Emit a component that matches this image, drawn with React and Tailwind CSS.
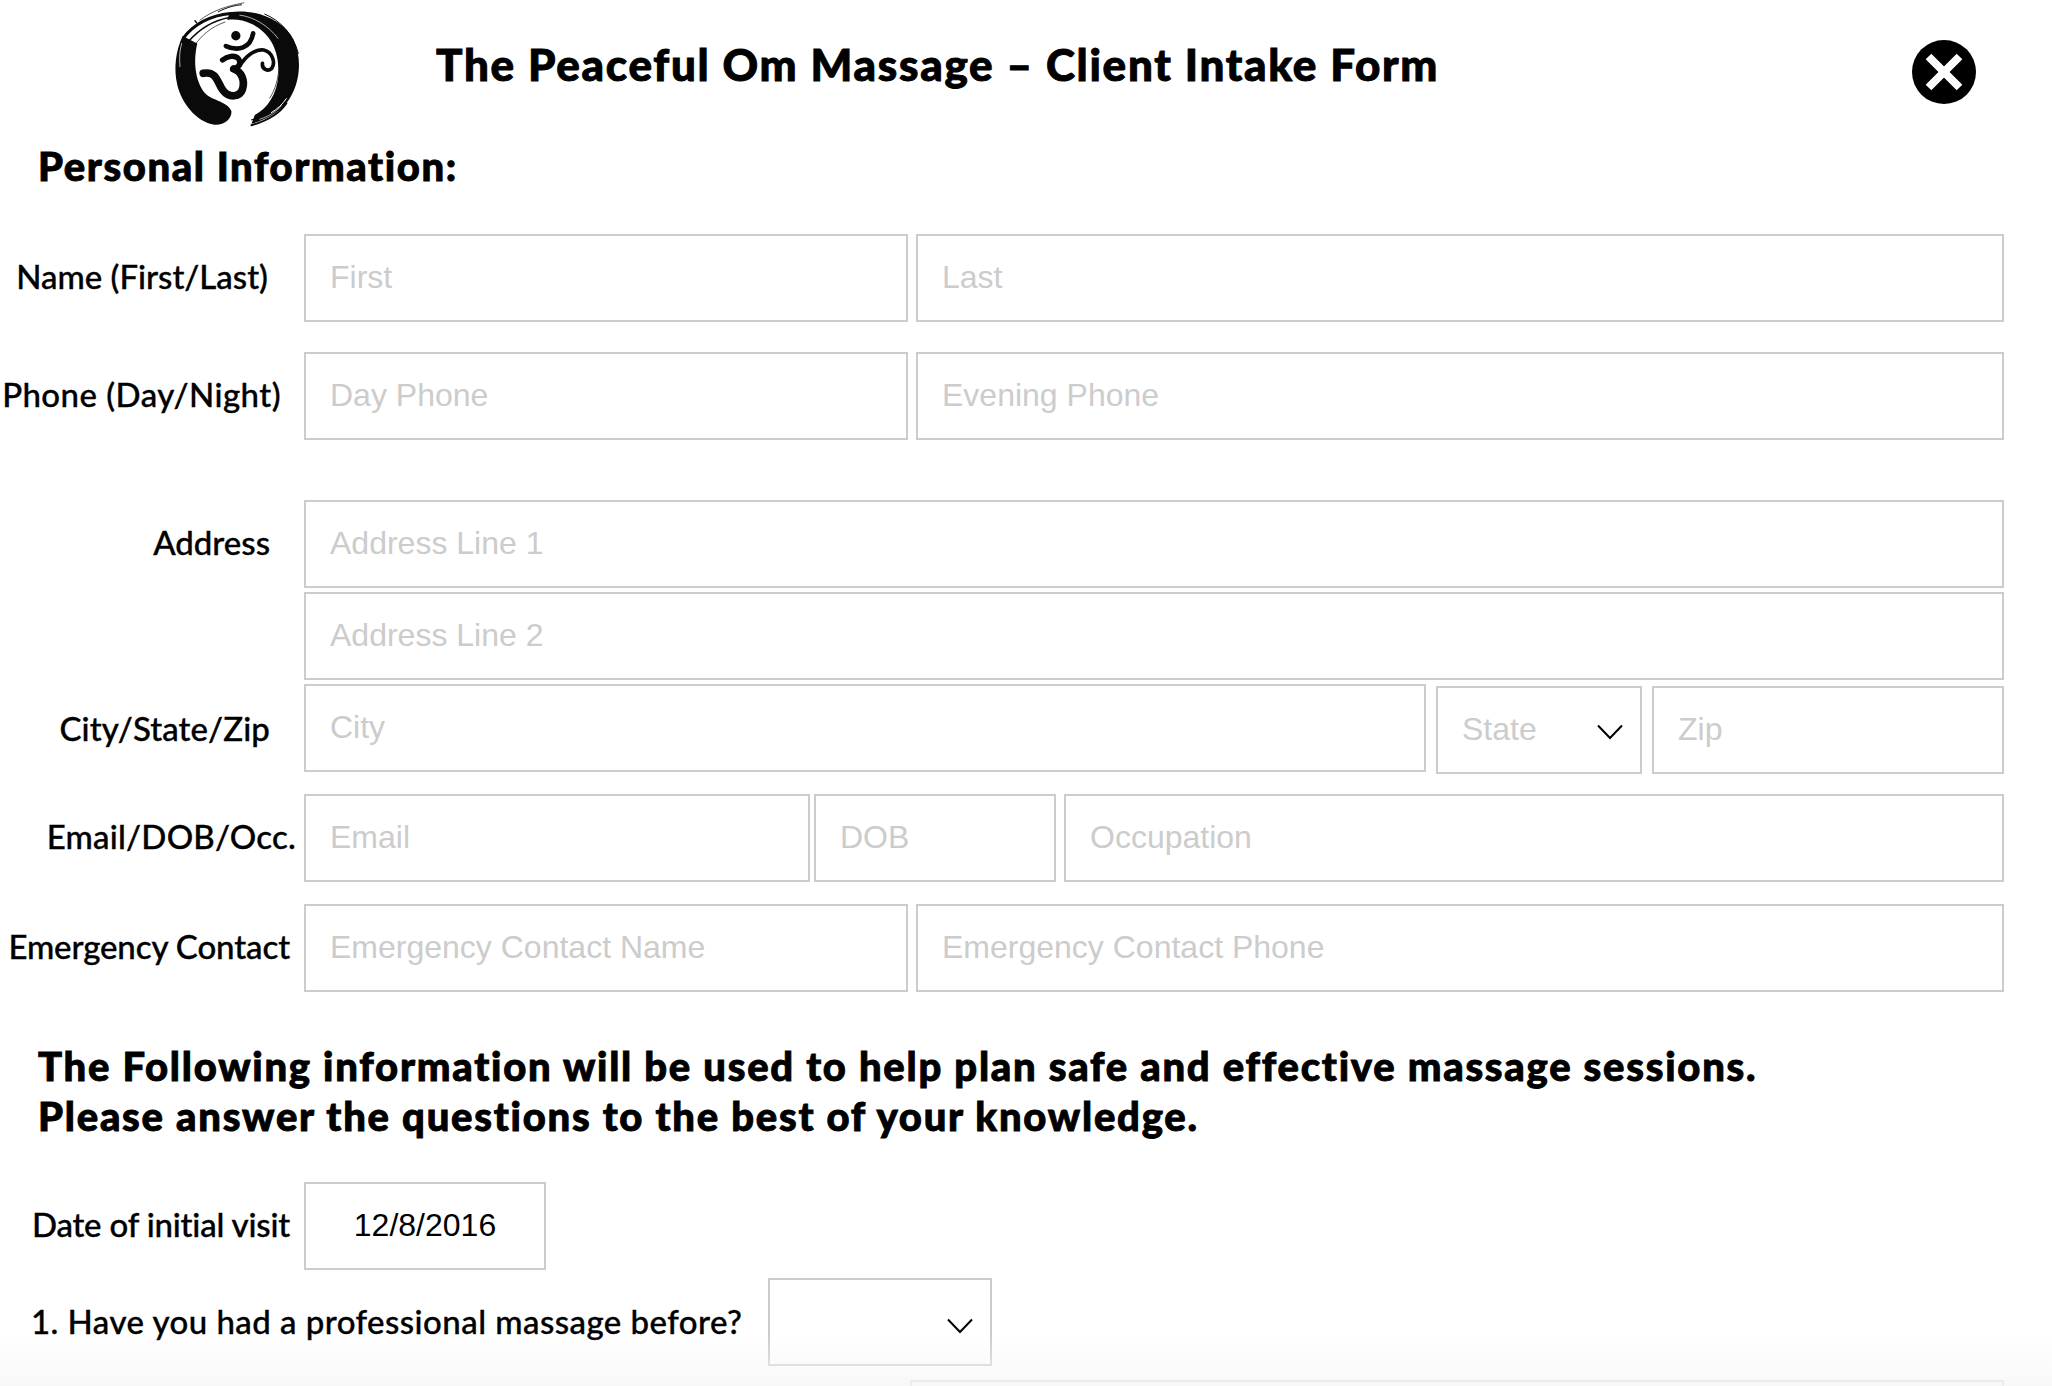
const boxClass =
  "h-[88px] border-2 border-[#cccccc] bg-white flex items-center px-[24px] pb-[2px] font-['Liberation_Sans',sans-serif] text-[32px] text-[#cccccc] overflow-hidden whitespace-nowrap";

const headingClass = "font-black text-black [-webkit-text-stroke:0.9px_black]";

const Field = ({ text, className = "" }) => (
  <div className={`${boxClass} ${className}`}>{text}</div>
);

const Label = ({ children, className = "" }) => (
  <div
    className={`w-[304px] shrink-0 pb-[2px] text-right whitespace-nowrap text-[33px] font-medium text-black [-webkit-text-stroke:0.35px_black] ${className}`}
  >
    {children}
  </div>
);

const Chevron = ({ className = "" }) => (
  <svg viewBox="0 0 26 16" fill="none" className={`absolute w-[26px] h-[16px] ${className}`}>
    <path d="M1 1.5L13 14L25 1.5" stroke="#000" strokeWidth="2" />
  </svg>
);

const Logo = () => (
  <svg viewBox="90 0 400 390" className="w-[133px] h-[130px]">
    {/* enso ring */}
    <path
      fill="#0a0a0a"
      d="M275 335C275 360 250 378 220 374C170 365 125 310 112 255C100 205 108 150 128 108L172 130C158 190 168 250 198 282C218 302 265 305 275 335Z"
    />
    <path
      fill="#0a0a0a"
      d="M270 36C340 25 430 55 462 120C490 180 480 260 440 310C415 340 375 360 335 372L345 345C385 325 412 280 416 225C420 160 396 100 336 72C310 60 285 56 262 60Z"
    />
    {/* dry brush streaks */}
    <g fill="none" stroke="#0a0a0a" strokeLinecap="round">
      <path d="M132 112C160 75 210 45 272 40" strokeWidth="9" />
      <path d="M145 125C175 90 215 62 268 52" strokeWidth="5" />
      <path d="M165 135C185 105 215 80 255 66" strokeWidth="2" />
      <path d="M180 60C220 30 260 18 312 8" strokeWidth="2" />
      <path d="M235 35C260 22 285 15 305 14" strokeWidth="3" />
      <path d="M165 62L170 68" strokeWidth="4" />
      <path d="M375 42C420 60 460 100 476 160" strokeWidth="3" />
      <path d="M440 310C420 340 385 362 335 376" strokeWidth="6" />
      <path d="M420 318C395 340 365 352 335 360" strokeWidth="3" />
      <path d="M405 110C425 160 425 240 390 295" strokeWidth="2" />
      <path d="M180 270C195 290 215 300 240 308" strokeWidth="2" />
    </g>
    <g fill="none" stroke="#ffffff" strokeLinecap="round">
      <path d="M395 338C412 328 428 314 440 296" strokeWidth="3" />
      <path d="M360 358C385 350 405 338 425 318" strokeWidth="2" />
      <path d="M300 45C340 50 385 75 415 115" strokeWidth="2" />
      <path d="M125 130C118 155 118 175 120 200" strokeWidth="2" />
    </g>
    {/* om glyph */}
    <circle cx="288" cy="107" r="14" fill="#0a0a0a" />
    <g fill="none" stroke="#0a0a0a" strokeLinecap="round" strokeLinejoin="round">
      <path d="M258 138C295 155 332 145 340 100" strokeWidth="14" />
      <path d="M190 220C232 212 232 250 250 272C268 295 300 292 308 268C316 240 305 215 282 207" strokeWidth="23" />
      <path d="M248 180C262 168 285 164 296 176C306 190 295 206 278 207" strokeWidth="16" />
      <path d="M300 198C316 170 345 146 372 150C398 156 408 188 396 205C384 216 366 208 368 190" strokeWidth="11" />
    </g>
  </svg>
);

const CloseIcon = () => (
  <svg viewBox="0 0 64 64" className="w-[64px] h-[64px]">
    <circle cx="32" cy="32" r="32" fill="#000" />
    <path d="M16.5 16.5L47.5 47.5M47.5 16.5L16.5 47.5" stroke="#fff" strokeWidth="8" fill="none" />
  </svg>
);

export default function App() {
  return (
    <div className="relative w-full h-[1386px] overflow-hidden bg-white font-['Lato',sans-serif] text-black">
      {/* Header */}
      <div className="flex h-[130px] items-start">
        <div className="ml-[170px] w-[133px] shrink-0">
          <Logo />
        </div>
        <h1 className={`ml-[133px] mt-[37px] text-[44px] leading-[54px] tracking-[1.7px] whitespace-nowrap ${headingClass}`}>
          The Peaceful Om Massage – Client Intake Form
        </h1>
        <div className="ml-auto mr-[76px] mt-[40px]">
          <CloseIcon />
        </div>
      </div>

      <h2 className={`pl-[38px] pt-[12px] h-[104px] text-[40px] leading-[48px] tracking-[1.6px] ${headingClass}`}>
        Personal Information:
      </h2>

      <div className="pr-[48px]">
        <div className="flex items-center">
          <Label className="pr-[36px]">Name (First/Last)</Label>
          <Field text="First" className="w-[604px]" />
          <Field text="Last" className="ml-[8px] flex-1" />
        </div>
        <div className="flex items-center mt-[30px]">
          <Label className="pr-[23px] tracking-[0.45px]">Phone (Day/Night)</Label>
          <Field text="Day Phone" className="w-[604px]" />
          <Field text="Evening Phone" className="ml-[8px] flex-1" />
        </div>
        <div className="flex items-center mt-[60px]">
          <Label className="pr-[34px]">Address</Label>
          <Field text="Address Line 1" className="flex-1" />
        </div>
        <div className="flex items-center mt-[4px]">
          <Label />
          <Field text="Address Line 2" className="flex-1" />
        </div>
        <div className="flex items-start mt-[4px]">
          <Label className="pr-[34px] leading-[88px] tracking-[0.1px]">City/State/Zip</Label>
          <Field text="City" className="w-[1122px]" />
          <div className="ml-[10px] mt-[2px] w-[206px] relative">
            <Field text="State" />
            <Chevron className="right-[19px] top-[38px]" />
          </div>
          <Field text="Zip" className="ml-[10px] mt-[2px] flex-1" />
        </div>
        <div className="flex items-center mt-[20px]">
          <Label className="pr-[8px] tracking-[0.2px]">Email/DOB/Occ.</Label>
          <Field text="Email" className="w-[506px]" />
          <Field text="DOB" className="ml-[4px] w-[242px]" />
          <Field text="Occupation" className="ml-[8px] flex-1" />
        </div>
        <div className="flex items-center mt-[22px]">
          <Label className="pr-[14px] tracking-[-0.1px]">Emergency Contact</Label>
          <Field text="Emergency Contact Name" className="w-[604px]" />
          <Field text="Emergency Contact Phone" className="ml-[8px] flex-1" />
        </div>
      </div>

      <p className={`pl-[38px] mt-[49px] text-[40px] leading-[50px] tracking-[1.75px] whitespace-nowrap ${headingClass}`}>
        The Following information will be used to help plan safe and effective massage sessions.
        <br />
        Please answer the questions to the best of your knowledge.
      </p>

      <div className="flex items-center mt-[41px]">
        <Label className="pr-[14px] tracking-[-0.2px]">Date of initial visit</Label>
        <div className={`${boxClass} w-[242px] !text-black justify-center`}>12/8/2016</div>
      </div>

      <div className="flex items-center mt-[8px] pl-[31px]">
        <div className="w-[737px] shrink-0 whitespace-nowrap text-[33px] font-medium tracking-[0.45px] [-webkit-text-stroke:0.35px_black]">
          1. Have you had a professional massage before?
        </div>
        <div className={`${boxClass} w-[224px] relative`}>
          <Chevron className="right-[17px] top-[38px]" />
        </div>
      </div>

      <div className="ml-[910px] mr-[48px] mt-[14px] h-[88px] border-2 border-[#cccccc] bg-white" />

      {/* fade at the bottom edge */}
      <div className="absolute left-0 right-0 bottom-0 h-[50px] bg-gradient-to-b from-white/0 to-[#f6f6f6]/80 pointer-events-none" />
    </div>
  );
}
